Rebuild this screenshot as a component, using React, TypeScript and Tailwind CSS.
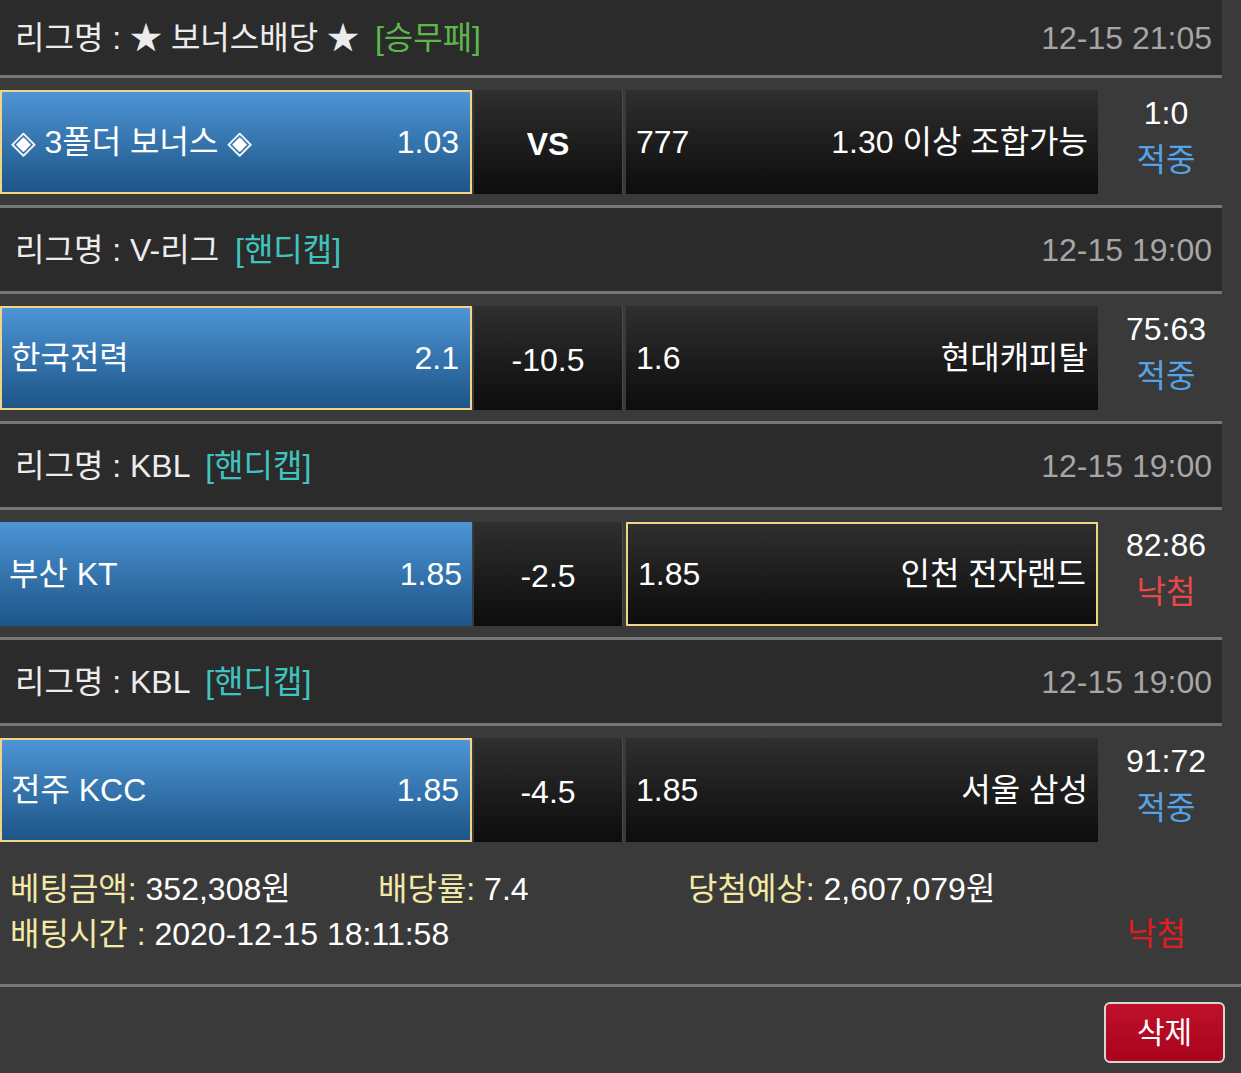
import React from 'react';

type Match = {
  league: string;
  tag: string;
  tagColor: string;
  time: string;
  home: string;
  homeOdds: string;
  mid: string;
  midBold?: boolean;
  awayOdds: string;
  away: string;
  score: string;
  result: string;
  win: boolean;
  pick: 'home' | 'away';
  headerH: string;
};

const matches: Match[] = [
  {
    league: '★ 보너스배당 ★',
    tag: '[승무패]',
    tagColor: 'text-[#5cb84c]',
    time: '12-15 21:05',
    home: '◈ 3폴더 보너스 ◈',
    homeOdds: '1.03',
    mid: 'VS',
    midBold: true,
    awayOdds: '777',
    away: '1.30 이상 조합가능',
    score: '1:0',
    result: '적중',
    win: true,
    pick: 'home',
    headerH: 'h-[75px]',
  },
  {
    league: 'V-리그',
    tag: '[핸디캡]',
    tagColor: 'text-[#3fc4c0]',
    time: '12-15 19:00',
    home: '한국전력',
    homeOdds: '2.1',
    mid: '-10.5',
    awayOdds: '1.6',
    away: '현대캐피탈',
    score: '75:63',
    result: '적중',
    win: true,
    pick: 'home',
    headerH: 'h-[83px]',
  },
  {
    league: 'KBL',
    tag: '[핸디캡]',
    tagColor: 'text-[#3fc4c0]',
    time: '12-15 19:00',
    home: '부산 KT',
    homeOdds: '1.85',
    mid: '-2.5',
    awayOdds: '1.85',
    away: '인천 전자랜드',
    score: '82:86',
    result: '낙첨',
    win: false,
    pick: 'away',
    headerH: 'h-[83px]',
  },
  {
    league: 'KBL',
    tag: '[핸디캡]',
    tagColor: 'text-[#3fc4c0]',
    time: '12-15 19:00',
    home: '전주 KCC',
    homeOdds: '1.85',
    mid: '-4.5',
    awayOdds: '1.85',
    away: '서울 삼성',
    score: '91:72',
    result: '적중',
    win: true,
    pick: 'home',
    headerH: 'h-[83px]',
  },
];

function MatchBlock({ m, last }: { m: Match; last: boolean }) {
  return (
    <>
      {/* League header */}
      <div className={`${m.headerH} bg-[#2b2b2b] flex items-center justify-between pl-[15px] pr-[10px]`}>
        <div className="text-[#ececec]">
          리그명 : {m.league} <span className={`${m.tagColor} ml-[7px]`}>{m.tag}</span>
        </div>
        <div className="text-[#a6a6a6]">{m.time}</div>
      </div>
      <div className="h-[3px] bg-[#767676]" />

      {/* Bet row */}
      <div className={`flex items-start pt-[12px] ${last ? 'h-[126px]' : 'h-[127px]'}`}>
        <div
          className={`w-[472px] h-[104px] flex items-center justify-between bg-gradient-to-b from-[#4d95d6] to-[#1d5587] text-white ${
            m.pick === 'home' ? 'border-2 border-[#f2d486] pl-[9px] pr-[11px]' : 'pl-[9px] pr-[10px]'
          }`}
        >
          <span>{m.home}</span>
          <span>{m.homeOdds}</span>
        </div>
        <div className="ml-[2px] w-[149px] h-[104px] flex items-center justify-center pt-[4px] bg-gradient-to-b from-[#2f2f2f] to-[#0d0d0d] text-white border-r border-[#4a4a4a]">
          <span className={m.midBold ? 'font-bold' : ''}>{m.mid}</span>
        </div>
        <div
          className={`ml-[3px] w-[472px] h-[104px] flex items-center justify-between bg-gradient-to-b from-[#2f2f2f] to-[#0d0d0d] text-white ${
            m.pick === 'away' ? 'border-2 border-[#f2d486] pl-[10px] pr-[10px]' : 'pl-[10px] pr-[10px]'
          }`}
        >
          <span>{m.awayOdds}</span>
          <span>{m.away}</span>
        </div>
        <div className="flex-1 h-[104px] pl-[12px] flex flex-col items-center justify-center leading-[47px] -mt-[5px]">
          <span className="text-white">{m.score}</span>
          <span className={m.win ? 'text-[#55a3e6]' : 'text-[#e84848]'}>{m.result}</span>
        </div>
      </div>
      {!last && <div className="h-[3px] bg-[#767676]" />}
    </>
  );
}

export default function App() {
  return (
    <div
      className="min-h-screen w-[1241px] bg-[#3a3a3a] text-[32px] leading-none overflow-hidden"
      style={{ fontFamily: '"Liberation Sans", Arial, "Noto Sans CJK KR", "DejaVu Sans", sans-serif' }}
    >
      <div className="w-[1222px]">
        {matches.map((m, i) => (
          <MatchBlock key={i} m={m} last={i === matches.length - 1} />
        ))}
      </div>

      {/* Summary */}
      <div className="h-[132px] pt-[15px] pl-[10px] leading-[45px]">
        <div className="flex">
          <div className="w-[368px]">
            <span className="text-[#f3e9a6]">베팅금액:</span> <span className="text-white">352,308원</span>
          </div>
          <div className="w-[310px]">
            <span className="text-[#f3e9a6]">배당률:</span> <span className="text-white">7.4</span>
          </div>
          <div>
            <span className="text-[#f3e9a6]">당첨예상:</span> <span className="text-white">2,607,079원</span>
          </div>
        </div>
        <div className="flex justify-between pr-[55px]">
          <div>
            <span className="text-[#f3e9a6]">배팅시간 :</span> <span className="text-white">2020-12-15 18:11:58</span>
          </div>
          <span className="text-[#e21d1d]">낙첨</span>
        </div>
      </div>
      <div className="h-[3px] bg-[#767676]" />

      <div className="flex justify-end pr-[16px] pt-[15px]">
        <button className="w-[121px] h-[61px] rounded-[6px] border-2 border-[#d6d6d6] bg-gradient-to-b from-[#c0102a] to-[#a8041c] text-white text-[30px]">
          삭제
        </button>
      </div>
    </div>
  );
}
